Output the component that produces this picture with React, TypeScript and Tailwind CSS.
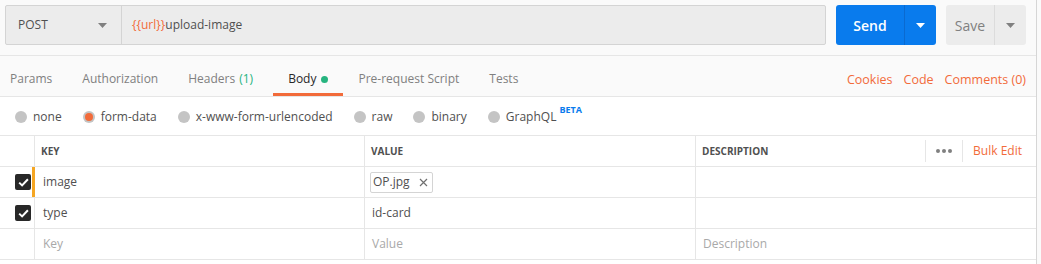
import React from 'react';

const tabs = [
  { label: 'Params' },
  { label: 'Authorization' },
  { label: 'Headers', count: '(1)' },
  { label: 'Body', active: true, dot: true },
  { label: 'Pre-request Script' },
  { label: 'Tests' },
];

const bodyTypes = [
  { label: 'none' },
  { label: 'form-data', checked: true },
  { label: 'x-www-form-urlencoded' },
  { label: 'raw' },
  { label: 'binary' },
  { label: 'GraphQL', beta: true },
];

function Caret({ className }: { className?: string }) {
  return (
    <svg width="9" height="5" viewBox="0 0 9 5" className={className}>
      <path d="M0 0h9L4.5 5z" fill="currentColor" />
    </svg>
  );
}

function Check() {
  return (
    <div className="w-4 h-4 rounded-[2px] bg-[#282828] flex items-center justify-center">
      <svg width="11" height="9" viewBox="0 0 11 9">
        <path d="M1.2 4.6l2.9 2.8 5.8-6.2" stroke="#fff" strokeWidth="2" fill="none" />
      </svg>
    </div>
  );
}

export default function App() {
  return (
    <div className="flex w-[1041px] h-[264px] bg-white text-[#505050] font-['Open_Sans',sans-serif]">
      <div className="w-[1037px] border-r border-[#d6d6d6]">
        {/* request bar */}
        <div className="h-[56px] bg-[#fafafa] border-b border-[#e6e6e6] pt-[5px] pl-[5px] flex">
          <div className="flex h-[40px] w-[821px] bg-[#ececec] border border-[#d4d4d4] rounded-[2px]">
            <div className="w-[116px] border-r border-[#d4d4d4] flex items-center justify-between pl-[12px] pr-[14px] text-[12px] text-[#505050]">
              POST
              <Caret className="text-[#808080]" />
            </div>
            <div className="flex items-center pl-[10px] text-[12px] text-[#505050]">
              <span className="text-[#f26b3a]">{'{{url}}'}</span>upload-image
            </div>
          </div>
          <div className="ml-[10px] flex h-[40px] w-[100px] rounded-[3px] bg-[#097bed] text-white">
            <div className="w-[69px] flex items-center justify-center text-[14px] font-semibold border-r border-[#0a6ad0]">Send</div>
            <div className="flex-1 flex items-center justify-center">
              <Caret />
            </div>
          </div>
          <div className="ml-[10px] flex h-[40px] w-[80px] rounded-[3px] bg-[#ececec] text-[#808080]">
            <div className="w-[49px] flex items-center justify-center text-[14px] border-r border-[#dcdcdc]">Save</div>
            <div className="flex-1 flex items-center justify-center">
              <Caret />
            </div>
          </div>
        </div>

        {/* tabs */}
        <div className="h-[41px] bg-[#fafafa] border-b border-[#e6e6e6] flex items-stretch justify-between">
          <div className="flex -ml-[5px]">
            {tabs.map((t) => (
              <div
                key={t.label}
                className={`px-[15px] flex items-center text-[12px] border-b-[3px] ${
                  t.active ? 'ml-[5px] border-[#f26b3a] text-[#282828]' : 'border-transparent text-[#808080]'
                }`}
              >
                <span className="pt-[9px]">{t.label}</span>
                {t.count && <span className="pt-[9px] ml-[4px] text-[#26b47f]">{t.count}</span>}
                {t.dot && <span className="mt-[9px] ml-[5px] w-[7px] h-[7px] rounded-full bg-[#26b47f]" />}
              </div>
            ))}
          </div>
          <div className="flex items-center gap-[11px] pr-[10px] pt-[8px] text-[12.5px] text-[#f26b3a]">
            <span>Cookies</span>
            <span>Code</span>
            <span>Comments (0)</span>
          </div>
        </div>

        {/* body types */}
        <div className="h-[38px] flex items-center pl-[15px] gap-[21px] text-[12px] text-[#505050]">
          {bodyTypes.map((b) => (
            <div key={b.label} className="flex items-center pt-[1px]">
              <span className="w-[12px] h-[12px] rounded-full bg-[#c4c4c4] flex items-center justify-center">
                {b.checked && <span className="w-[8px] h-[8px] rounded-full bg-[#f26b3a]" />}
              </span>
              <span className="ml-[6px]">{b.label}</span>
              {b.beta && <span className="ml-[3px] -mt-[14px] text-[9px] font-bold text-[#097bed]">BETA</span>}
            </div>
          ))}
        </div>

        {/* table */}
        <div className="border-t border-[#e6e6e6] text-[12px]">
          <div className="grid grid-cols-[35px_330px_331px_1fr] h-[31px] border-b border-[#e6e6e6]">
            <div className="border-r border-[#e6e6e6]" />
            <div className="border-r border-[#e6e6e6] flex items-center pl-[6px] text-[10px] font-bold text-[#505050]">KEY</div>
            <div className="border-r border-[#e6e6e6] flex items-center pl-[6px] text-[10px] font-bold text-[#505050]">VALUE</div>
            <div className="flex items-center justify-between pl-[6px]">
              <span className="text-[10px] font-bold text-[#505050]">DESCRIPTION</span>
              <div className="flex items-center h-[22px]">
                <div className="h-full border-l border-[#e6e6e6] px-[10px] flex items-center gap-[2px]">
                  <span className="w-[4px] h-[4px] rounded-full bg-[#808080]" />
                  <span className="w-[4px] h-[4px] rounded-full bg-[#808080]" />
                  <span className="w-[4px] h-[4px] rounded-full bg-[#808080]" />
                </div>
                <div className="h-full border-l border-[#e6e6e6] pl-[10px] pr-[14px] flex items-center text-[12px] text-[#f26b3a]">Bulk Edit</div>
              </div>
            </div>
          </div>

          <div className="grid grid-cols-[35px_330px_331px_1fr] h-[31px] border-b border-[#e6e6e6]">
            <div className="border-r-[3px] border-[#f5a623] flex items-center pl-[15px]">
              <Check />
            </div>
            <div className="border-r border-[#e6e6e6] flex items-center pl-[8px]">image</div>
            <div className="border-r border-[#e6e6e6] flex items-center pl-[5px]">
              <div className="flex items-center h-[21px] border border-[#d4d4d4] rounded-[2px] pl-[2px] pr-[4px]">
                <span className="text-[12px]">OP.jpg</span>
                <svg width="9" height="9" viewBox="0 0 9 9" className="ml-[9px]">
                  <path d="M1 1l7 7M8 1l-7 7" stroke="#707070" strokeWidth="1.2" />
                </svg>
              </div>
            </div>
            <div />
          </div>

          <div className="grid grid-cols-[35px_330px_331px_1fr] h-[31px] border-b border-[#e6e6e6]">
            <div className="border-r border-[#e6e6e6] flex items-center pl-[15px]">
              <Check />
            </div>
            <div className="border-r border-[#e6e6e6] flex items-center pl-[8px]">type</div>
            <div className="border-r border-[#e6e6e6] flex items-center pl-[7px]">id-card</div>
            <div />
          </div>

          <div className="grid grid-cols-[35px_330px_331px_1fr] h-[31px] border-b border-[#e6e6e6] text-[#a9a9a9]">
            <div className="border-r border-[#e6e6e6]" />
            <div className="border-r border-[#e6e6e6] flex items-center pl-[8px]">Key</div>
            <div className="border-r border-[#e6e6e6] flex items-center pl-[7px]">Value</div>
            <div className="flex items-center pl-[7px]">Description</div>
          </div>
        </div>
      </div>
      <div className="flex-1 bg-[#fafafa]" />
    </div>
  );
}
